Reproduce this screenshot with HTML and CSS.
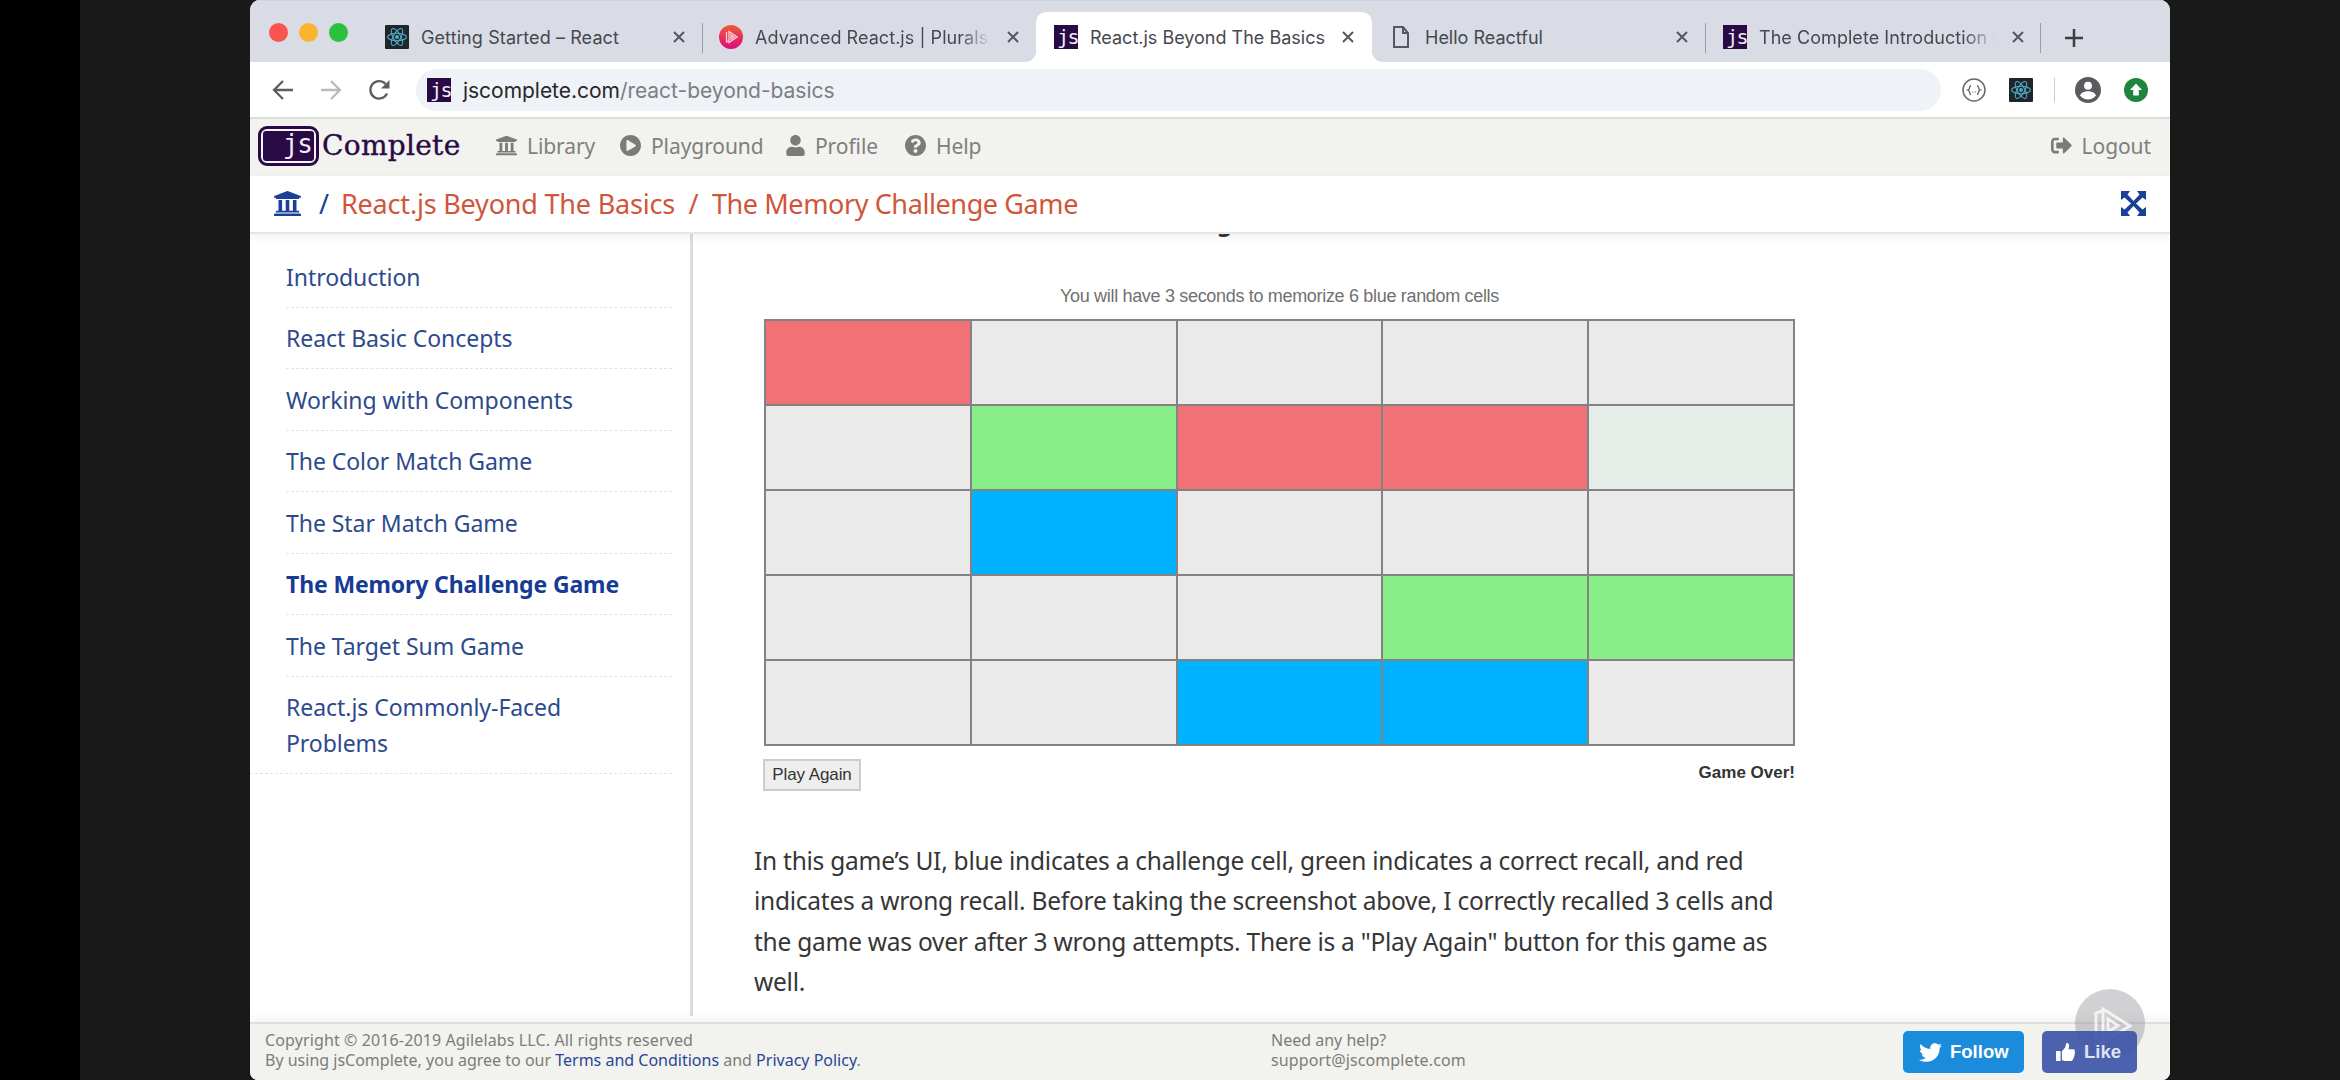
FILE: index.html
```html
<!DOCTYPE html>
<html lang="en">
<head>
<meta charset="utf-8">
<title>React.js Beyond The Basics</title>
<link rel="stylesheet" href="styles.css">
</head>
<body>
<svg class="defs" width="0" height="0">
  <symbol id="library" viewBox="16 16 480 480"><path d="M496 128v16a8 8 0 0 1-8 8h-24v12c0 6.627-5.373 12-12 12H60c-6.627 0-12-5.373-12-12v-12H24a8 8 0 0 1-8-8v-16a8 8 0 0 1 4.941-7.392l232-88a7.996 7.996 0 0 1 6.118 0l232 88A8 8 0 0 1 496 128zm-24 304H40c-13.255 0-24 10.745-24 24v16a8 8 0 0 0 8 8h464a8 8 0 0 0 8-8v-16c0-13.255-10.745-24-24-24zM96 192v192H60c-6.627 0-12 5.373-12 12v20h416v-20c0-6.627-5.373-12-12-12h-36V192h-64v192h-64V192h-64v192h-64V192H96z"/></symbol>
  <symbol id="react" viewBox="0 0 24 24"><rect width="24" height="24" rx="1" fill="#20252c"/><g fill="none" stroke="#4fa9c4" stroke-width="1.1"><ellipse cx="12" cy="12" rx="9.5" ry="3.7"/><ellipse cx="12" cy="12" rx="9.5" ry="3.7" transform="rotate(60 12 12)"/><ellipse cx="12" cy="12" rx="9.5" ry="3.7" transform="rotate(120 12 12)"/></g><circle cx="12" cy="12" r="2" fill="#4fa9c4"/></symbol>
  <symbol id="close" viewBox="0 0 12 12"><path d="M1 1l10 10M11 1L1 11" fill="none" stroke="#55585e" stroke-width="2"/></symbol>
</svg>
<div class="window">
  <div class="tabstrip">
    <div class="lights"><i class="red"></i><i class="amber"></i><i class="green"></i></div>
    <div class="tab tab-1"><svg class="fav"><use href="#react"/></svg><span class="title">Getting Started – React</span><svg class="x"><use href="#close"/></svg></div>
    <div class="tab tab-2"><svg class="fav" viewBox="0 0 24 24"><defs><linearGradient id="ps" x1="0" y1="0" x2="0" y2="1"><stop offset="0" stop-color="#f05a35"/><stop offset="1" stop-color="#e00a7c"/></linearGradient></defs><circle cx="12" cy="12" r="12" fill="url(#ps)"/><path d="M7.500 7v10l2-1M10 6.500v11l8-5.500zM12 10l3 2-3 2z" fill="none" stroke="#ffd3dc" stroke-width="1.300"/></svg><span class="title fade">Advanced React.js | Pluralsi</span><svg class="x"><use href="#close"/></svg></div>
    <div class="tab tab-3 active"><span class="fav js">js</span><span class="title">React.js Beyond The Basics</span><svg class="x"><use href="#close"/></svg></div>
    <div class="tab tab-4"><svg class="page" viewBox="0 0 16 22"><path d="M1 1h9l5 6v14H1zM10 1v6h5" fill="none" stroke="#55585e" stroke-width="2"/></svg><span class="title">Hello Reactful</span><svg class="x"><use href="#close"/></svg></div>
    <div class="tab tab-5"><span class="fav js">js</span><span class="title fade">The Complete Introduction t</span><svg class="x"><use href="#close"/></svg></div>
    <svg class="plus" viewBox="0 0 18 18"><path d="M9 0v18M0 9h18" stroke="#3c3f45" stroke-width="2.500"/></svg>
  </div>
  <div class="toolbar">
    <svg class="nav" viewBox="0 0 22 22"><path d="M21 11H2M11 2l-9 9 9 9" fill="none" stroke="#5a5d61" stroke-width="2.300"/></svg>
    <svg class="nav" viewBox="0 0 22 22"><path d="M1 11h19M11 2l9 9-9 9" fill="none" stroke="#b9bbbe" stroke-width="2.300"/></svg>
    <svg class="nav" viewBox="0 0 22 22"><path d="M19 14.500A8.700 8.700 0 1 1 17.500 5" fill="none" stroke="#5a5d61" stroke-width="2.300"/><path d="M21.500 1v8.500H13z" fill="#5a5d61"/></svg>
    <div class="omnibox"><span class="fav js">js</span><span class="url"><b>jscomplete.com</b>/react-beyond-basics</span></div>
    <svg class="ext" viewBox="0 0 24 24"><circle cx="12" cy="12" r="11" fill="#fff" stroke="#66696d" stroke-width="1.500"/><path d="M9 7.500c-2 0-1 4-2.800 4.500C8 12.500 7 16.500 9 16.500M15 7.500c2 0 1 4 2.800 4.500-1.800.5-.8 4.500-2.800 4.500M10.500 14h.8M12.800 14h.8" fill="none" stroke="#66696d" stroke-width="1.400"/></svg>
    <svg class="ext"><use href="#react"/></svg>
    <i class="rule"></i>
    <svg class="ext avatar" viewBox="0 0 26 26"><circle cx="13" cy="13" r="13" fill="#595b5f"/><circle cx="13" cy="8.800" r="4" fill="#fff"/><path d="M5 18.500c1-3.300 5-4.300 8-4.300s7 1 8 4.300c-2 2.700-5 4-8 4s-6-1.300-8-4z" fill="#fff"/></svg>
    <svg class="ext" viewBox="0 0 24 24"><circle cx="12" cy="12" r="12" fill="#1e8540"/><path d="M12 5.500l6 6.500h-3.200v5.500H9.200V12H6z" fill="#fff"/></svg>
  </div>
  <header class="header">
    <div class="logo"><span class="badge"><span>js</span></span><span class="word">Complete</span></div>
    <a class="m-lib"><svg class="ic"><use href="#library"/></svg>Library</a>
    <a class="m-play"><svg class="ic" viewBox="8 8 496 496"><path d="M256 8C119 8 8 119 8 256s111 248 248 248 248-111 248-248S393 8 256 8zm115.700 272l-176 101c-15.800 8.800-35.700-2.500-35.700-21V152c0-18.400 19.800-29.800 35.700-21l176 107c16.400 9.200 16.400 32.900 0 42z"/></svg>Playground</a>
    <a class="m-user"><svg class="ic user" viewBox="0 0 448 512"><path d="M224 256c70.700 0 128-57.300 128-128S294.700 0 224 0 96 57.300 96 128s57.300 128 128 128zm89.600 32h-16.700c-22.200 10.200-46.900 16-72.900 16s-50.600-5.800-72.900-16h-16.700C60.200 288 0 348.200 0 422.400V464c0 26.500 21.500 48 48 48h352c26.500 0 48-21.500 48-48v-41.600c0-74.200-60.200-134.400-134.400-134.400z"/></svg>Profile</a>
    <a class="m-help"><svg class="ic" viewBox="8 8 496 496"><path d="M504 256c0 136.997-111.043 248-248 248S8 392.997 8 256C8 119.083 119.043 8 256 8s248 111.083 248 248zM262.655 90c-54.497 0-89.255 22.957-116.549 63.758-3.536 5.286-2.353 12.415 2.715 16.258l34.699 26.310c5.205 3.947 12.621 3.008 16.665-2.122 17.864-22.658 30.113-35.797 57.303-35.797 20.429 0 45.698 13.148 45.698 32.958 0 14.976-12.363 22.667-32.534 33.976C247.128 238.528 216 254.941 216 296v4c0 6.627 5.373 12 12 12h56c6.627 0 12-5.373 12-12v-1.333c0-28.462 83.186-29.647 83.186-106.667 0-58.002-60.165-102-116.531-102zM256 338c-25.365 0-46 20.635-46 46 0 25.364 20.635 46 46 46s46-20.636 46-46c0-25.365-20.635-46-46-46z"/></svg>Help</a>
    <a class="m-out"><svg class="ic" viewBox="0 0 512 512"><path d="M497 273L329 441c-15 15-41 4.500-41-17v-96H152c-13.300 0-24-10.700-24-24v-96c0-13.300 10.700-24 24-24h136V88c0-21.400 25.900-32 41-17l168 168c9.300 9.400 9.300 24.600 0 34zM192 436v-40c0-6.600-5.400-12-12-12H96c-17.700 0-32-14.300-32-32V160c0-17.700 14.300-32 32-32h84c6.600 0 12-5.400 12-12V76c0-6.600-5.400-12-12-12H96c-53 0-96 43-96 96v192c0 53 43 96 96 96h84c6.600 0 12-5.400 12-12z"/></svg>Logout</a>
  </header>
  <nav class="crumbs">
    <svg class="home"><use href="#library"/></svg><span class="slash blue">/</span>
    <a>React.js Beyond The Basics</a><span class="slash">/</span><a class="page-name">The Memory Challenge Game</a>
    <svg class="expand" viewBox="0 0 25 25"><path d="M0 0h9L6.500 3.500l6 6.500 6-6.500L16 0h9v9l-3.500-2.500-6.500 6 6.500 6L25 16v9h-9l2.500-3.500-6-6.500-6 6.500L9 25H0v-9l3.500 2.500 6.500-6-6.500-6L0 9z"/></svg>
  </nav>
  <div class="main">
    <aside class="sidebar">
      <a>Introduction</a>
      <a>React Basic Concepts</a>
      <a>Working with Components</a>
      <a>The Color Match Game</a>
      <a>The Star Match Game</a>
      <a class="current">The Memory Challenge Game</a>
      <a>The Target Sum Game</a>
      <a>React.js Commonly-Faced<br>Problems</a>
    </aside>
    <article class="content">
      <div class="clipped">g</div>
      <p class="caption">You will have 3 seconds to memorize 6 blue random cells</p>
      <div class="grid">
        <i class="wrong"></i><i></i><i></i><i></i><i></i>
        <i></i><i class="right"></i><i class="wrong"></i><i class="wrong"></i><i class="mint"></i>
        <i></i><i class="target"></i><i></i><i></i><i></i>
        <i></i><i></i><i></i><i class="right"></i><i class="right"></i>
        <i></i><i></i><i class="target"></i><i class="target"></i><i></i>
      </div>
      <div class="status"><button>Play Again</button><strong>Game Over!</strong></div>
      <p class="text">In this game’s UI, blue indicates a challenge cell, green indicates a correct recall, and red<br>indicates a wrong recall. Before taking the screenshot above, I correctly recalled 3 cells and<br>the game was over after 3 wrong attempts. There is a "Play Again" button for this game as<br>well.</p>
    </article>
  </div>
  <footer class="footer">
    <svg class="watermark" viewBox="0 0 70 70"><circle cx="35" cy="35" r="35" fill="#8c8c90" fill-opacity=".4"/><path d="M28 53l-7 3V24l6-2M28 20v33l27-16zM33 30v13l10-6.500z" fill="none" stroke="#fff" stroke-opacity=".75" stroke-width="3"/></svg>
    <p class="legal"><span class="copy">Copyright © 2016-2019 Agilelabs LLC. All rights reserved</span><br>By using jsComplete, you agree to our <a>Terms and Conditions</a> and <a>Privacy Policy</a>.</p>
    <p class="contact">Need any help?<br><span class="copy">support@jscomplete.com</span></p>
    <a class="follow"><svg viewBox="0 48 512 416"><path d="M459.370 151.716c.325 4.548.325 9.097.325 13.645 0 138.720-105.583 298.558-298.558 298.558-59.452 0-114.680-17.219-161.137-47.106 8.447.974 16.568 1.299 25.340 1.299 49.055 0 94.213-16.568 130.274-44.832-46.132-.975-84.792-31.188-98.112-72.772 6.498.974 12.995 1.624 19.818 1.624 9.421 0 18.843-1.300 27.614-3.573-48.081-9.747-84.143-51.980-84.143-102.985v-1.299c13.969 7.797 30.214 12.670 47.431 13.319-28.264-18.843-46.781-51.005-46.781-87.391 0-19.492 5.197-37.360 14.294-52.954 51.655 63.675 129.300 105.258 216.365 109.807-1.624-7.797-2.599-15.918-2.599-24.040 0-57.828 46.782-104.934 104.934-104.934 30.213 0 57.502 12.670 76.670 33.137 23.715-4.548 46.456-13.320 66.599-25.340-7.798 24.366-24.366 44.833-46.132 57.827 21.117-2.273 41.584-8.122 60.426-16.243-14.292 20.791-32.161 39.308-52.628 54.253z"/></svg>Follow</a>
    <a class="like"><svg viewBox="0 0 20 20"><path d="M0 8.500h4.800V19H0zM6.200 9l3.600-4.500c.6-1.500.2-4.500 1.800-4.500 2.300 0 2.800 3 1.500 6.500h5c1.800 0 2.300 1.800 1.400 3 .8 1 .7 2-.2 2.800.5 1 .2 2-.7 2.600.3 1-.2 1.900-1 2.200.1 1.300-.8 1.900-2 1.900H10c-1.500 0-2.500-1-3.800-1.200z"/></svg>Like</a>
  </footer>
</div>
</body>
</html>
```
FILE: styles.css
```css
* { box-sizing: border-box; }
body { margin: 0; width: 2340px; height: 1080px; overflow: hidden; padding: 0 170px 0 250px; background: linear-gradient(90deg, #000 80px, #191919 80px); font-family: "Noto Sans", sans-serif; }
p { margin: 0; }
svg { display: block; flex: none; }
.defs { position: absolute; }
.window { width: 1920px; height: 1080px; display: flex; flex-direction: column; overflow: hidden; background: #fff; border-radius: 10px 10px 8px 8px; }

.tabstrip { height: 62px; display: flex; align-items: flex-end; background: #dadce5; border-top: 1px solid #c9d6e4; font: 18px "Inter", sans-serif; color: #45484e; }
.lights { width: 116px; height: 61px; display: flex; gap: 11px; padding: 22px 0 0 19px; }
.lights i { width: 19px; height: 19px; border-radius: 50%; }
.lights .red { background: #fa544f; }
.lights .amber { background: #f9b52e; }
.lights .green { background: #2bc13f; }
.tab { height: 50px; display: flex; align-items: center; position: relative; }
.fav { width: 24px; height: 24px; flex: none; }
.js { background: #2a0a45; color: #f3ecf8; font: 20px/24px "DejaVu Sans Mono", monospace; text-align: right; letter-spacing: -1.500px; }
.title { flex: 1; margin-left: 12px; white-space: nowrap; }
.tab-2 .title, .tab-5 .title { letter-spacing: .05px; }
.tab-1 .title { letter-spacing: .1px; }
.fade { -webkit-mask-image: linear-gradient(90deg, #000 86%, transparent 99%); mask-image: linear-gradient(90deg, #000 86%, transparent 99%); }
.x { width: 12px; height: 12px; }
.page { width: 16px; height: 22px; margin-right: 4px; }
.tab-1 { width: 337px; padding: 0 18px 0 19px; }
.tab-2 { width: 333px; padding: 0 17px 0 16px; }
.tab-2 .x, .tab-5 .x { margin-left: 14px; }
.tab-3 { width: 336px; padding: 0 18px 0 18px; }
.tab-4 { width: 334px; padding: 0 18px 0 21px; }
.tab-5 { width: 335px; padding: 0 18px 0 17px; }
.tab-1::after, .tab-4::after, .tab-5::after { content: ""; position: absolute; right: 0; top: 11px; width: 1.500px; height: 30px; background: #9a9da6; }
.active { background: #fff; border-radius: 10px 10px 0 0; }
.active::before, .active::after { content: ""; position: absolute; bottom: 0; width: 10px; height: 10px; background: radial-gradient(circle at 0 0, transparent 9.500px, #fff 10px); }
.active::before { left: -10px; }
.active::after { right: -10px; background: radial-gradient(circle at 100% 0, transparent 9.500px, #fff 10px); }
.plus { width: 18px; height: 18px; margin: 0 0 15px 24px; }

.toolbar { height: 57px; padding: 2px 21px 1px 22px; display: flex; align-items: center; border-bottom: 2px solid #dcdedb; }
.nav { width: 22px; height: 22px; margin-right: 26px; }
.omnibox { width: 1525px; height: 42px; margin-right: 21px; padding-left: 11px; border-radius: 21px; background: #eff2f6; display: flex; align-items: center; }
.url { margin-left: 12px; font: 21px "Inter", sans-serif; letter-spacing: -.03px; color: #7b7e83; white-space: nowrap; }
.url b { font-weight: 400; color: #26282c; }
.ext { width: 24px; height: 24px; margin-right: 23px; }
.rule { width: 1px; height: 24px; background: #c9cbce; margin-right: 20px; margin-left: -2px; }
.avatar { width: 26px; height: 26px; }
.ext:last-child { margin-right: 0; }

.header { height: 57px; display: flex; align-items: center; padding: 0 19px 4px 8px; background: #f2f2ef; color: #7f807c; font-size: 21px; letter-spacing: -.08px; }
.header a { display: flex; align-items: center; gap: 10px; white-space: nowrap; }
.ic { width: 21px; height: 21px; fill: #7b7c77; }
.user { width: 19px; }
.logo { display: flex; align-items: center; width: 238px; gap: 3px; }
.badge { width: 61px; height: 40px; border: 3px solid #2a0a45; border-radius: 9px; padding: 2px; background: #f7f3fa; }
.badge span { display: block; height: 30px; background: #2a0a45; border-radius: 3px; color: #f3ecf8; font: 26px/26px "DejaVu Sans Mono", monospace; text-align: right; padding-right: 2px; letter-spacing: -1px; }
.word { font: 28px "DejaVu Serif", serif; letter-spacing: .3px; color: #2a0a45; -webkit-text-stroke: .4px #2a0a45; }
.m-lib { width: 124px; }
.m-play { width: 166px; }
.m-user { width: 119px; }
.header .m-out { margin-left: auto; }

.crumbs { height: 58px; flex: none; position: relative; z-index: 1; display: flex; align-items: center; padding: 0 24px 2px; background: #fff; border-bottom: 2px solid #e6e6e6; box-shadow: 0 3px 8px rgba(0,0,0,.06); font-size: 27px; letter-spacing: -.2px; color: #cf563b; white-space: nowrap; }
.home { width: 27px; height: 27px; fill: #1c3f97; }
.slash { width: 37px; text-align: center; }
.crumbs .blue { width: 40px; padding-left: 6px; color: #1c3f97; }
.page-name { letter-spacing: -.4px; }
.expand { width: 25px; height: 25px; margin-left: auto; fill: #1c3f97; }

.main { flex: 1; min-height: 0; display: flex; }
.sidebar { width: 443px; height: 782px; padding: 12px 18px 0 0; border-right: 3px solid #dcdcde; font-size: 23px; line-height: 36px; letter-spacing: -.05px; color: #2d4a8c; }
.sidebar a { display: block; margin-left: 36px; padding: 12.500px 0 12px; border-bottom: 1px dashed #e4e4e4; white-space: nowrap; }
.sidebar a:last-child { margin-left: 0; padding-left: 36px; }
.current { font-weight: 700; letter-spacing: -.13px; color: #173a94; }

.content { flex: 1; padding-left: 61px; }
.clipped { height: 47px; margin-top: -12px; padding-left: 463px; font-size: 24px; font-weight: 700; line-height: 0; color: #333; }
.caption { width: 1031px; padding-left: 20px; height: 50px; line-height: 54px; text-align: center; font-family: "Liberation Sans", sans-serif; font-size: 18px; letter-spacing: -.32px; color: #707070; }
.grid { width: 1031px; height: 427px; margin-left: 10px; padding: 2px; display: grid; grid-template-columns: repeat(5, 1fr); grid-template-rows: repeat(5, 1fr); gap: 2px; background: #838383; }
.grid i { background: #eaeaea; }
.grid .wrong { background: #f07176; }
.grid .right { background: #87ee88; }
.grid .target { background: #00b2ff; }
.grid .mint { background: #e6ece8; }
.status { width: 1031px; margin: 13px 0 0 9px; display: flex; justify-content: space-between; font-family: "Liberation Sans", sans-serif; color: #333; }
.status button { width: 98px; height: 32px; padding: 0; border: 2px solid #cdcdcd; background: #eee; font: 17px "Liberation Sans", sans-serif; letter-spacing: -.1px; color: #333; white-space: nowrap; }
.status strong { font-size: 17px; line-height: 28px; margin-right: -1px; }
.text { margin-top: 50px; font-size: 24.500px; letter-spacing: -.25px; line-height: 40.400px; color: #363636; white-space: nowrap; }

.footer { height: 58px; flex: none; position: relative; display: flex; align-items: flex-start; padding: 7px 33px 0 15px; background: #f2f2ef; border-top: 2px solid #dedee0; box-shadow: 0 -4px 10px rgba(0,0,0,.05); font-size: 16px; line-height: 19.500px; color: #7d7d79; white-space: nowrap; }
.legal { width: 1006px; }
.legal a { color: #2a4596; }
.copy { letter-spacing: .12px; }
.footer > a { height: 42px; display: flex; align-items: center; border-radius: 5px; color: #fff; font: bold 18.500px "Liberation Sans", sans-serif; }
.footer svg { fill: #fff; }
.follow { margin-left: auto; width: 121px; padding-left: 16px; gap: 8px; background: #1b8bdb; }
.follow svg { width: 23px; height: 19px; }
.footer .like { position: relative; width: 95px; margin-left: 18px; padding-left: 14px; gap: 9px; background: rgba(58,82,167,.9); color: #dfe3f3; }
.like svg { width: 19px; height: 19px; }
.footer .watermark { position: absolute; left: 1825px; top: -35px; width: 70px; height: 70px; }
```
